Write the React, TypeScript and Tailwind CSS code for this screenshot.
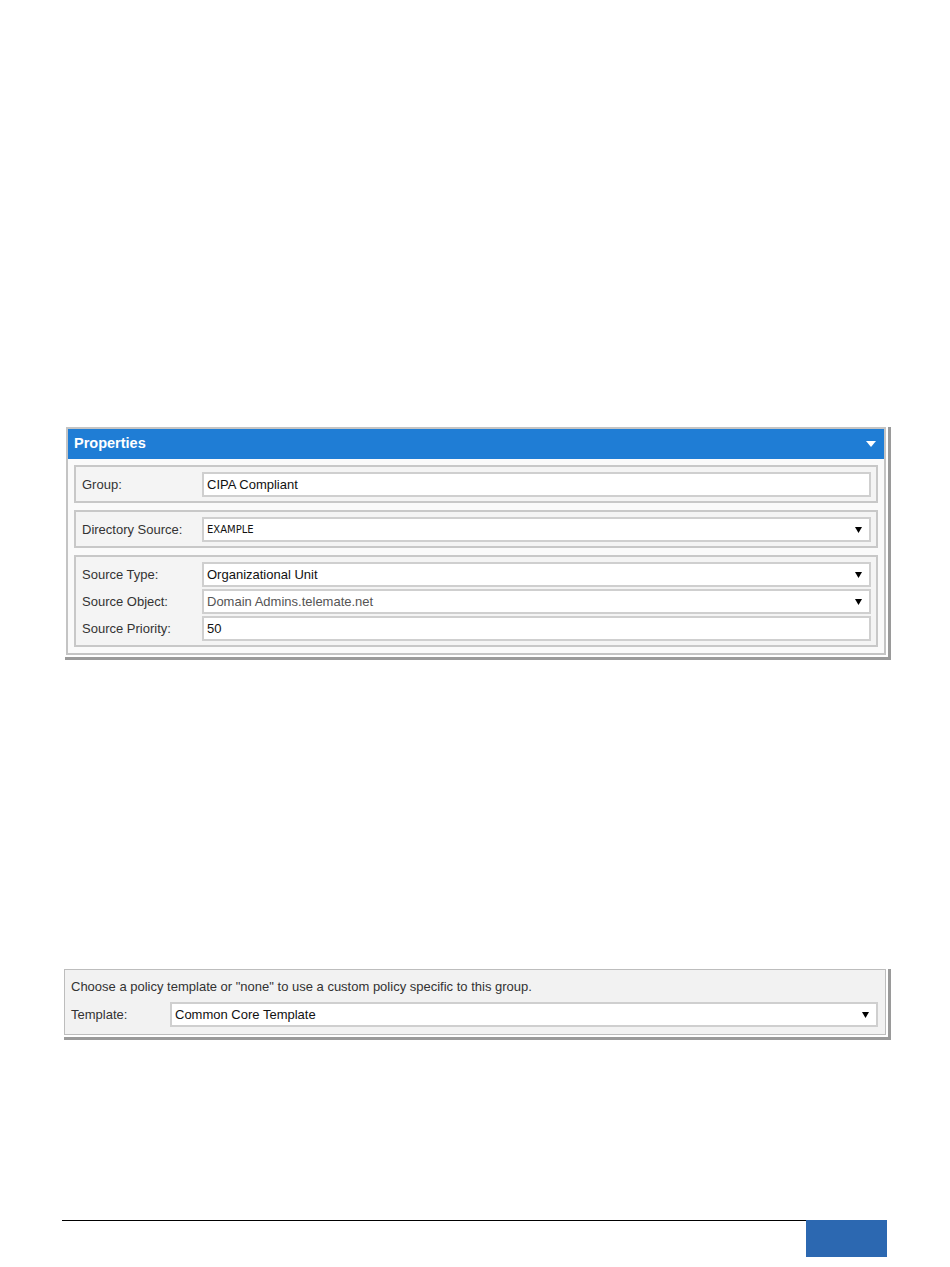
import React from 'react';

const font = "font-['Liberation_Sans',Arial,sans-serif]";

function Caret({ className = '' }: { className?: string }) {
  return (
    <svg width="7" height="6" viewBox="0 0 7 6" className={className}>
      <path d="M0 0 H7 L3.5 6 Z" fill="currentColor" />
    </svg>
  );
}

function Field({
  value,
  select,
  muted,
  small,
}: {
  value: string;
  select?: boolean;
  muted?: boolean;
  small?: boolean;
}) {
  return (
    <div className="flex-1 h-[25px] bg-white border-2 border-[#cfcfcf] flex items-center pl-[3px] pr-[7px]">
      <span
        className={`flex-1 ${
          small ? "font-['DejaVu_Sans',sans-serif] text-[10px] text-[#111]" : 'text-[13px]'
        } ${muted ? 'text-[#555]' : small ? '' : 'text-[#111]'}`}
      >
        {value}
      </span>
      {select && <Caret className="text-black" />}
    </div>
  );
}

function Row({ label, children }: { label: string; children: React.ReactNode }) {
  return (
    <div className="flex items-center">
      <div className="w-[126px] pl-[6px] text-[13px] text-[#333]">{label}</div>
      {children}
    </div>
  );
}

function Box({ children }: { children: React.ReactNode }) {
  return (
    <div className="border-2 border-[#c8c8c8] bg-[#f4f4f4] pt-[5px] pb-[4px] pr-[5px] flex flex-col gap-[2px]">
      {children}
    </div>
  );
}

export default function App() {
  return (
    <div className={`w-[950px] h-[1267px] bg-white flex flex-col ${font}`}>
      {/* Properties panel */}
      <div className="mt-[427px] ml-[65px] w-fit border-r-[3px] border-b-[3px] border-[#9a9a9a] pr-[2px] pb-[2px]">
        <div className="ml-[1px] w-[820px] border-2 border-[#c4c4c4] bg-[#fafafa]">
          <div className="h-[30px] bg-[#1f7dd5] flex items-center justify-between pl-[6px] pr-[8px]">
            <span className="text-white font-bold text-[14.5px]">Properties</span>
            <svg width="10" height="6" viewBox="0 0 10 6">
              <path d="M0 0 H10 L5 6 Z" fill="#fff" />
            </svg>
          </div>
          <div className="p-[6px] flex flex-col gap-[7px]">
            <Box>
              <Row label="Group:">
                <Field value="CIPA Compliant" />
              </Row>
            </Box>
            <Box>
              <Row label="Directory Source:">
                <Field value="EXAMPLE" select small />
              </Row>
            </Box>
            <Box>
              <Row label="Source Type:">
                <Field value="Organizational Unit" select />
              </Row>
              <Row label="Source Object:">
                <Field value="Domain Admins.telemate.net" select muted />
              </Row>
              <Row label="Source Priority:">
                <Field value="50" />
              </Row>
            </Box>
          </div>
        </div>
      </div>

      {/* Template panel */}
      <div className="mt-[309px] ml-[64px] w-fit border-r-[3px] border-b-[3px] border-[#9a9a9a] pr-[2px] pb-[2px]">
        <div className="w-[822px] border border-[#bdbdbd] bg-[#f2f2f2] pt-[9px] pb-[7px] pl-[6px] pr-[7px]">
          <div className="text-[13px] leading-[16px] text-[#333]">
            Choose a policy template or "none" to use a custom policy specific to this group.
          </div>
          <div className="flex items-center mt-[7px]">
            <div className="w-[99px] text-[13px] text-[#333]">Template:</div>
            <Field value="Common Core Template" select />
          </div>
        </div>
      </div>

      <div className="flex-1" />

      {/* Footer */}
      <div className="ml-[62px] mb-[10px] flex items-start">
        <div className="w-[744px] h-[1px] bg-black" />
        <div className="w-[81px] h-[37px] bg-[#2c68b1]" />
      </div>
    </div>
  );
}
